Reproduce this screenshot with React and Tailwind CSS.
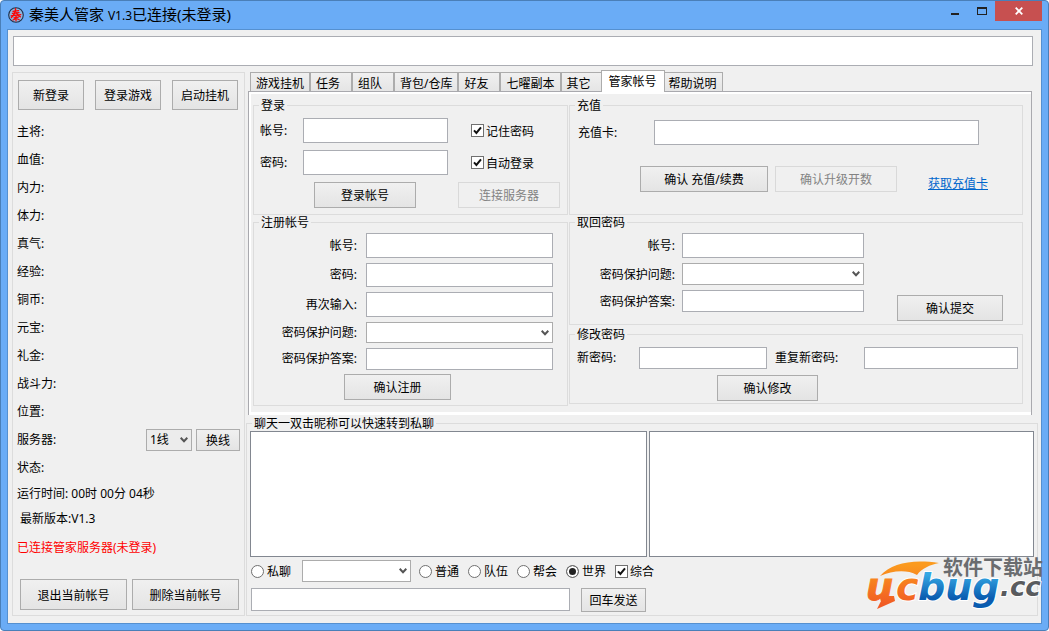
import { useState } from "react";
import clsx from "clsx";

const TABS = ["游戏挂机", "任务", "组队", "背包/仓库", "好友", "七曜副本", "其它", "管家帐号", "帮助说明"];

const STATS = ["主将:", "血值:", "内力:", "体力:", "真气:", "经验:", "铜币:", "元宝:", "礼金:", "战斗力:", "位置:"];

const CHANNELS = ["普通", "队伍", "帮会", "世界"];

function Button({ className, ...props }) {
  return (
    <button
      type="button"
      className={clsx(
        "shrink-0 border border-[#acacac] bg-linear-to-b from-[#f0f0f0] to-[#e4e4e4] pt-[2px] text-center leading-4 whitespace-nowrap disabled:border-[#d9d9d9] disabled:bg-none disabled:text-[#838383]",
        className
      )}
      {...props}
    />
  );
}

function TextBox({ className, ...props }) {
  return (
    <input
      type="text"
      className={clsx("min-w-0 border border-[#abadb3] bg-white px-1 outline-none", className)}
      {...props}
    />
  );
}

function Select({ className, selectClass = "bg-white", options = [""], ...props }) {
  return (
    <div className={clsx("relative", className)}>
      <select
        className={clsx(
          "block h-full w-full appearance-none rounded-none border border-[#acacac] px-[3px] leading-4 outline-none",
          selectClass
        )}
        {...props}
      >
        {options.map((option) => (
          <option key={option}>{option}</option>
        ))}
      </select>
      <svg
        viewBox="0 0 8 6"
        className="pointer-events-none absolute top-1/2 right-1 h-[6px] w-[8px] -translate-y-1/2"
      >
        <path d="M0.7 0.8 L4 4.2 L7.3 0.8" fill="none" stroke="#555" strokeWidth="2" />
      </svg>
    </div>
  );
}

function CheckBox({ label }) {
  return (
    <label className="flex items-center gap-[2px] whitespace-nowrap">
      <span className="relative size-[13px]">
        <input
          type="checkbox"
          defaultChecked
          className="peer block size-[13px] appearance-none border border-[#707070] bg-white"
        />
        <svg
          viewBox="0 0 13 13"
          className="pointer-events-none absolute inset-0 hidden size-[13px] peer-checked:block"
        >
          <path d="M3 6.4 L5.4 9 L10 3.4" fill="none" stroke="#111" strokeWidth="2" />
        </svg>
      </span>
      <span className="pt-[2px]">{label}</span>
    </label>
  );
}

function Radio({ label, ...props }) {
  return (
    <label className="flex items-center gap-[3px] whitespace-nowrap">
      <input
        type="radio"
        name="channel"
        className="size-[13px] appearance-none rounded-full border border-[#707070] bg-white checked:bg-[#222] checked:shadow-[inset_0_0_0_2px_#fff]"
        {...props}
      />
      <span className="pt-[2px]">{label}</span>
    </label>
  );
}

function Group({ title, className, children }) {
  return (
    <fieldset className={clsx("min-w-0 border border-[#dcdcdc]", className)}>
      <legend className="ml-[5px] h-4 px-[2px] pt-px leading-4">{title}</legend>
      {children}
    </fieldset>
  );
}

function AppIcon() {
  return (
    <svg viewBox="0 0 16 16" className="size-4 shrink-0">
      <circle cx="8" cy="8" r="7.3" fill="#8db4dc" stroke="#20304a" strokeWidth="1.1" />
      <g stroke="#f00" fill="none" strokeLinecap="round">
        <path d="M5 4.4 L10.6 3.6 M4.4 6.4 L11 5.6 M3 8.8 L12.8 7.6" strokeWidth="1.2" />
        <path d="M7.6 1.8 C7.6 5 6.6 7.4 3.4 10.4 M8.6 6 C9.2 7.6 10.6 9 12.4 9.8" strokeWidth="1.4" />
        <path d="M6 10.8 L10.4 10.2 M8 9 L8 14 M7 12 L5 13 M9 11.8 L11.2 12.8" strokeWidth="1.2" />
      </g>
    </svg>
  );
}

function TitleBar() {
  return (
    <header className="flex h-7 items-start">
      <div className="flex min-w-0 flex-1 items-center gap-[5px] pt-[2px] pl-[1px]">
        <AppIcon />
        <h1 className="truncate text-[15px] leading-[22px]">
          秦美人管家 <span className="text-[12px]">V1.3</span>已连接(未登录)
        </h1>
      </div>
      <button type="button" aria-label="最小化" className="flex h-5 w-[27px] items-center justify-center">
        <svg viewBox="0 0 8 8" className="size-2">
          <path d="M0 6 H8 V8 H0 Z" fill="#222" />
        </svg>
      </button>
      <button type="button" aria-label="最大化" className="flex h-5 w-[27px] items-center justify-center">
        <svg viewBox="0 0 10 8" className="h-2 w-[10px]">
          <path d="M0 0 H10 V8 H0 Z M1 2 V7 H9 V2 Z" fill="#222" fillRule="evenodd" />
        </svg>
      </button>
      <button type="button" aria-label="关闭" className="flex h-5 w-[47px] items-center justify-center bg-[#c75050]">
        <svg viewBox="0 0 8 8" className="size-2">
          <path d="M0.7 0.7 L7.3 7.3 M7.3 0.7 L0.7 7.3" stroke="#fff" strokeWidth="1.8" />
        </svg>
      </button>
    </header>
  );
}

function Sidebar() {
  return (
    <aside className="mt-[2px] flex w-[233px] shrink-0 flex-col border border-[#dcdcdc] pt-[7px] pb-[5px]">
      <div className="flex gap-[11px] px-[5px]">
        <Button className="h-[30px] w-[66px]">新登录</Button>
        <Button className="h-[30px] w-[66px]">登录游戏</Button>
        <Button className="h-[30px] w-[66px]">启动挂机</Button>
      </div>
      <ul className="mt-2 pr-1 pl-1 leading-7">
        {STATS.map((stat) => (
          <li key={stat}>{stat}</li>
        ))}
        <li className="flex h-7 items-center gap-1">
          <label htmlFor="line" className="flex-1">
            服务器:
          </label>
          <Select id="line" className="h-[22px] w-[46px]" selectClass="bg-[#ececec]" options={["1线", "2线"]} />
          <Button className="h-[22px] w-11">换线</Button>
        </li>
        <li>状态:</li>
      </ul>
      <p className="pl-1 leading-6">运行时间: 00时 00分 04秒</p>
      <p className="pl-[7px] leading-[26px]">最新版本:V1.3</p>
      <p className="pl-1 leading-8 text-[#f00]">已连接管家服务器(未登录)</p>
      <div className="mt-auto flex gap-[5px] pl-[7px]">
        <Button className="h-[31px] w-[107px]">退出当前帐号</Button>
        <Button className="h-[31px] w-[107px]">删除当前帐号</Button>
      </div>
    </aside>
  );
}

function Tabs() {
  const [active, setActive] = useState("管家帐号");

  return (
    <div role="tablist" className="flex h-[22px] items-end pl-1">
      {TABS.map((tab) => (
        <button
          key={tab}
          type="button"
          role="tab"
          aria-selected={tab === active}
          onClick={() => setActive(tab)}
          className={clsx(
            "border border-[#acacac] text-left whitespace-nowrap",
            tab === active
              ? "relative z-10 -mx-[2px] h-[22px] border-b-0 bg-white px-[7px]"
              : "h-5 min-w-[42px] bg-linear-to-b from-[#f0f0f0] to-[#e5e5e5] px-[5px] pt-[3px]"
          )}
        >
          {tab}
        </button>
      ))}
    </div>
  );
}

function LoginGroup() {
  return (
    <Group title="登录">
      <div className="flex flex-col gap-[7px] pt-[5px] pb-[6px] pl-[6px]">
        <div className="flex items-center">
          <label htmlFor="login-user" className="w-[43px]">
            帐号:
          </label>
          <TextBox id="login-user" className="mr-[23px] h-[25px] w-[145px]" />
          <CheckBox label="记住密码" />
        </div>
        <div className="flex items-center">
          <label htmlFor="login-pass" className="w-[43px]">
            密码:
          </label>
          <TextBox id="login-pass" type="password" className="mr-[23px] h-[25px] w-[145px]" />
          <CheckBox label="自动登录" />
        </div>
        <div className="flex justify-between pr-[7px] pl-[54px]">
          <Button className="h-[26px] w-[102px]">登录帐号</Button>
          <Button className="h-[26px] w-[102px]" disabled>
            连接服务器
          </Button>
        </div>
      </div>
    </Group>
  );
}

function RegisterGroup() {
  return (
    <Group title="注册帐号" className="-mt-px">
      <div className="grid grid-cols-[103px_1fr] items-center gap-x-[9px] gap-y-[5px] pt-[3px] pr-[14px]">
        <label htmlFor="reg-user" className="text-right">
          帐号:
        </label>
        <TextBox id="reg-user" className="h-[25px]" />
        <label htmlFor="reg-pass" className="text-right">
          密码:
        </label>
        <TextBox id="reg-pass" type="password" className="h-6" />
        <label htmlFor="reg-again" className="text-right">
          再次输入:
        </label>
        <TextBox id="reg-again" type="password" className="h-[25px]" />
        <label htmlFor="reg-question" className="text-right">
          密码保护问题:
        </label>
        <Select id="reg-question" className="h-[21px]" />
        <label htmlFor="reg-answer" className="text-right">
          密码保护答案:
        </label>
        <TextBox id="reg-answer" className="h-[22px]" />
      </div>
      <Button className="mt-1 mb-[5px] ml-[90px] block h-[26px] w-[107px]">确认注册</Button>
    </Group>
  );
}

function RechargeGroup() {
  return (
    <Group title="充值">
      <div className="flex items-center pt-[7px] pr-[43px] pl-2">
        <label htmlFor="card" className="w-[76px]">
          充值卡:
        </label>
        <TextBox id="card" className="h-[25px] flex-1" />
      </div>
      <div className="mt-[21px] mb-[22px] flex items-end pl-[70px]">
        <Button className="mr-[7px] h-[26px] w-[128px]">确认 充值/续费</Button>
        <Button className="mr-[31px] h-[26px] w-[122px]" disabled>
          确认升级开数
        </Button>
        <a href="#card" className="text-[#0066cc] underline">
          获取充值卡
        </a>
      </div>
    </Group>
  );
}

function RecoverGroup() {
  return (
    <Group title="取回密码" className="-mt-px">
      <div className="flex justify-between pt-[3px] pr-[19px] pb-[3px]">
        <div className="mb-[9px] grid grid-cols-[105px_182px] items-center gap-x-[7px] gap-y-[5px]">
          <label htmlFor="rec-user" className="text-right">
            帐号:
          </label>
          <TextBox id="rec-user" className="h-[25px]" />
          <label htmlFor="rec-question" className="pt-[2px] text-right">
            密码保护问题:
          </label>
          <Select id="rec-question" className="h-[22px]" />
          <label htmlFor="rec-answer" className="pt-[2px] text-right">
            密码保护答案:
          </label>
          <TextBox id="rec-answer" className="h-[22px]" />
        </div>
        <Button className="h-[26px] w-[106px] self-end">确认提交</Button>
      </div>
    </Group>
  );
}

function ChangeGroup() {
  return (
    <Group title="修改密码" className="mt-px">
      <div className="flex items-center pt-[5px] pr-1 pl-[7px]">
        <label htmlFor="new-pass" className="w-[62px]">
          新密码:
        </label>
        <TextBox id="new-pass" type="password" className="mr-2 h-[22px] w-32" />
        <label htmlFor="new-again" className="w-[89px]">
          重复新密码:
        </label>
        <TextBox id="new-again" type="password" className="h-[22px] flex-1" />
      </div>
      <Button className="mt-[6px] mb-[2px] ml-[147px] block h-[26px] w-[101px]">确认修改</Button>
    </Group>
  );
}

function Chat() {
  return (
    <Group title="聊天一双击昵称可以快速转到私聊" className="flex flex-1 flex-col">
      <div className="flex flex-1 gap-[2px] px-[3px]">
        <textarea
          aria-label="聊天"
          className="block min-h-[126px] min-w-0 flex-[397] resize-none border border-[#828790] bg-white outline-none"
        />
        <textarea
          aria-label="私聊"
          className="block min-h-[126px] min-w-0 flex-[385] resize-none border border-[#828790] bg-white outline-none"
        />
      </div>
      <div className="mt-[3px] flex h-[22px] items-center pl-1">
        <Radio label="私聊" />
        <Select aria-label="私聊对象" className="mr-2 ml-[11px] h-[22px] w-[109px]" />
        <div className="flex gap-[9px]">
          {CHANNELS.map((channel) => (
            <Radio key={channel} label={channel} defaultChecked={channel === "世界"} />
          ))}
          <CheckBox label="综合" />
        </div>
      </div>
      <div className="mt-[6px] mb-[3px] flex gap-[11px] pl-1">
        <TextBox aria-label="消息" className="h-[23px] w-[319px]" />
        <Button className="h-6 w-[65px]">回车发送</Button>
      </div>
    </Group>
  );
}

function Watermark() {
  return (
    <svg
      viewBox="0 0 184 60"
      className="pointer-events-none absolute right-[2px] bottom-[15px] h-[60px] w-[184px] overflow-visible"
    >
      <defs>
        <linearGradient id="orange" gradientUnits="userSpaceOnUse" x1="0" y1="10" x2="0" y2="50">
          <stop offset="0" stopColor="#fb9a1e" />
          <stop offset="1" stopColor="#f15a24" />
        </linearGradient>
        <linearGradient id="blue" gradientUnits="userSpaceOnUse" x1="0" y1="16" x2="0" y2="50">
          <stop offset="0.1" stopColor="#35a8e4" />
          <stop offset="0.8" stopColor="#0a5cb0" />
        </linearGradient>
      </defs>
      <path d="M18 21 C30 8 50 4 77 8 C68 10 60 13 55 20 C44 14 30 16 18 21 Z" fill="url(#orange)" />
      <g fontFamily="'DejaVu Sans', sans-serif" fontWeight="700" fontStyle="italic">
        <text x="4" y="45" fontSize="38" fill="url(#orange)" stroke="url(#orange)" strokeWidth="1">
          u
        </text>
        {/* tail hanging from the u */}
        <path d="M18 41 L32 41 L33 46 L15 54 L19 46 Z" fill="url(#orange)" />
        <g stroke="#fff" strokeWidth="2" paintOrder="stroke">
          <text x="34" y="45" fontSize="38" fill="url(#orange)">c</text>
          <text x="56" y="45" fontSize="38" fill="url(#blue)">bug</text>
          <text x="138" y="41" fontSize="26" fill="#595b5e">.cc</text>
        </g>
      </g>
      <text
        x="81"
        y="20"
        fontSize="20"
        fontWeight="700"
        fontFamily="'Noto Sans CJK SC', sans-serif"
        fill="#6a6c6f"
      >
        软件下载站
      </text>
    </svg>
  );
}

export default function App() {
  return (
    <div className="relative flex min-h-screen flex-col rounded-[4px] border border-[#4a7fb8] bg-[#6aacf6] px-[6px] pb-[6px] font-['Noto_Sans','Noto_Sans_CJK_SC',sans-serif] text-[12px] leading-4 text-black">
      <TitleBar />
      <main className="flex flex-1 flex-col border border-[#5590d0] bg-[#f0f0f0] pt-[6px] pr-[3px] pb-[7px] pl-1">
        <TextBox aria-label="公告" className="mr-[5px] ml-px h-[30px]" />
        <div className="mt-1 flex flex-1 gap-px">
          <Sidebar />
          <div className="flex min-w-0 flex-1 flex-col">
            <Tabs />
            <div className="-mt-px mr-[6px] ml-[2px] border border-b-0 border-[#a9a9ae]">
              <div className="grid grid-cols-[minmax(0,315fr)_minmax(0,454fr)] items-start gap-x-px border-t-2 border-b-[3px] border-l-2 border-white pt-[3px] pr-2 pb-[6px] pl-[2px]">
                <div>
                  <LoginGroup />
                  <RegisterGroup />
                </div>
                <div>
                  <RechargeGroup />
                  <RecoverGroup />
                  <ChangeGroup />
                </div>
              </div>
            </div>
            <Chat />
          </div>
        </div>
      </main>
      <Watermark />
    </div>
  );
}
